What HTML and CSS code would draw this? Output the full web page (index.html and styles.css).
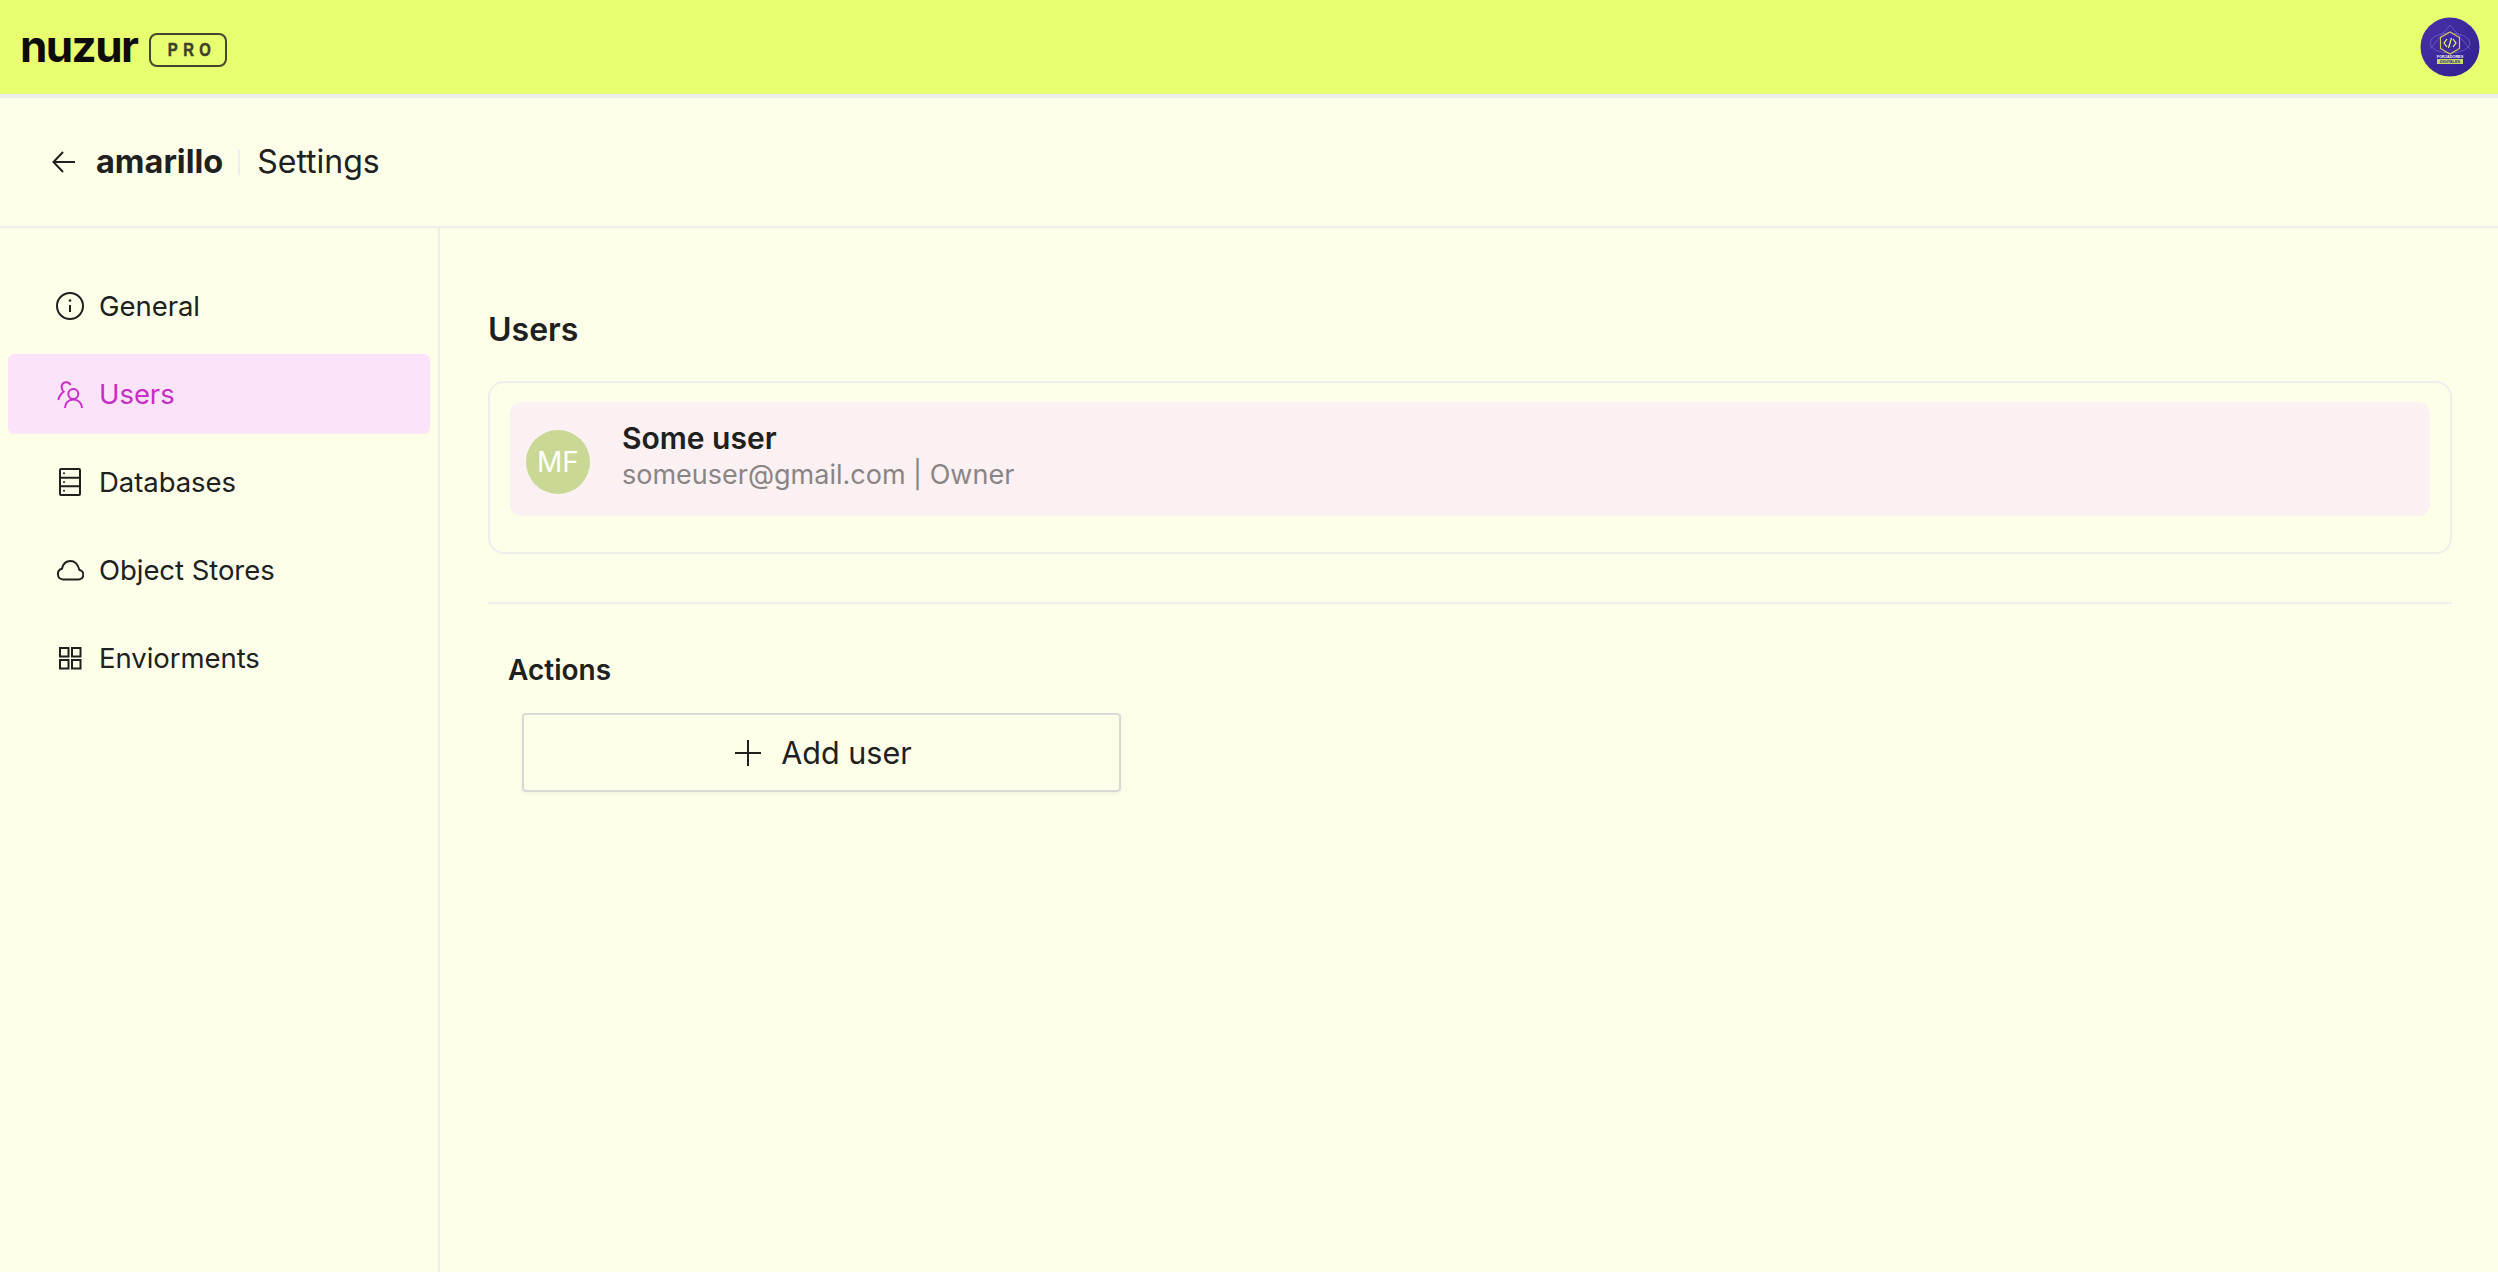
FILE: index.html
```html
<!DOCTYPE html>
<html lang="en">
<head>
<meta charset="utf-8">
<title>amarillo Settings</title>
<link rel="stylesheet" href="styles.css">
</head>
<body>
<header class="topbar">
  <div class="brand">
    <span class="logo">nuzur</span>
    <span class="pro"><span class="pro-text">PRO</span></span>
  </div>
  <svg class="org-avatar" viewBox="0 0 60 60" aria-label="Organization">
    <defs>
      <linearGradient id="orgbg" x1="0" y1="0" x2="1" y2="1">
        <stop offset="0" stop-color="#4b2fa8"/>
        <stop offset="1" stop-color="#2f218f"/>
      </linearGradient>
    </defs>
    <circle cx="30" cy="30" r="29.500" fill="url(#orgbg)"/>
    <g fill="none" stroke="#8f84d8" stroke-width=".5">
      <ellipse cx="30" cy="26" rx="20" ry="10"/>
      <path d="M30 8 L10 32 M30 8 L50 32"/>
    </g>
    <path d="M30 15 L39.500 20.500 V31.500 L30 37 L20.500 31.500 V20.500 Z" fill="#3f2a9c" stroke="#d9c95c" stroke-width="1.200"/>
    <path d="M27 22 L24 26 L27 30 M33 22 L36 26 L33 30 M31.500 21 L28.500 31" fill="none" stroke="#e8ff6f" stroke-width="1.200"/>
    <text class="org-line" x="30" y="41" text-anchor="middle">FORJADORES</text>
    <rect x="17" y="42" width="26" height="5" fill="#c9df5a"/>
    <text class="org-line org-line-dark" x="30" y="46.200" text-anchor="middle">DIGITALES</text>
  </svg>
</header>

<section class="subbar">
  <svg class="back" viewBox="0 0 24 24"><path d="M23 12H1.500M11 2 1.500 12 11 22"/></svg>
  <h1 class="project">amarillo</h1>
  <span class="vsep"></span>
  <span class="subtitle">Settings</span>
</section>

<div class="layout">
  <nav class="sidebar">
    <a class="nav-item">
      <svg class="nav-icon" viewBox="0 0 28 28"><circle cx="14" cy="14" r="13"/><path d="M14 13v7"/><circle class="dot" cx="14" cy="8.500" r="1.300"/></svg>
      <span>General</span>
    </a>
    <a class="nav-item active">
      <svg class="nav-icon" viewBox="0 0 28 28"><circle cx="17.300" cy="14" r="5"/><path d="M9 28c0-5 3.500-8.500 8.300-8.500S26 23 26 28"/><path d="M14.700 5C13.500 3 11.500 2 9.500 2.300 6.800 2.800 5.200 5 5.700 7.500c.2 1.700.9 3.300 1.900 4.200C4.800 13.800 3 16.800 2.300 20"/></svg>
      <span>Users</span>
    </a>
    <a class="nav-item">
      <svg class="nav-icon" viewBox="0 0 28 28"><rect x="4" y="1" width="20" height="26" rx="1"/><path d="M4 9.700h20M4 18.300h20"/><circle class="dot" cx="8" cy="5.300" r="1"/><circle class="dot" cx="8" cy="14" r="1"/><circle class="dot" cx="8" cy="22.700" r="1"/></svg>
      <span>Databases</span>
    </a>
    <a class="nav-item">
      <svg class="nav-icon" viewBox="0 0 28 28"><path d="M7 23.500h15.500a4.800 4.800 0 0 0 1-9.500C22 8.800 18.800 5 14.500 5 10.200 5 7 8 6 12.700A5.500 5.500 0 0 0 7 23.500Z"/></svg>
      <span>Object Stores</span>
    </a>
    <a class="nav-item">
      <svg class="nav-icon" viewBox="0 0 28 28"><rect x="4" y="4" width="8.500" height="8.500"/><rect x="16" y="4" width="8.500" height="8.500"/><rect x="4" y="16" width="8.500" height="8.500"/><rect x="16" y="16" width="8.500" height="8.500"/></svg>
      <span>Enviorments</span>
    </a>
  </nav>

  <main class="content">
    <h2 class="section-title">Users</h2>
    <div class="user-card">
      <div class="user-row">
        <div class="user-avatar">MF</div>
        <div class="user-info">
          <div class="user-name">Some user</div>
          <div class="user-meta">someuser@gmail.com | Owner</div>
        </div>
      </div>
    </div>
    <hr class="divider">
    <h3 class="actions-title">Actions</h3>
    <button class="add-btn" type="button">
      <svg class="plus" viewBox="0 0 28 28"><path d="M14 1v26M1 14h26"/></svg>
      <span>Add user</span>
    </button>
  </main>
</div>
</body>
</html>
```
FILE: styles.css
```css
* { box-sizing: border-box; }
html, body { height: 100%; }
body {
  margin: 0;
  display: flex;
  flex-direction: column;
  background: #fdffe9;
  color: #20201e;
  font-family: Inter, "Liberation Sans", sans-serif;
  overflow: hidden;
}

.topbar {
  height: 98px;
  flex: none;
  display: flex;
  align-items: center;
  justify-content: space-between;
  padding: 0 18px 0 20px;
  background: #e8ff70;
  border-bottom: 4px solid #eeeeec;
}
.brand { display: flex; align-items: center; gap: 12px; margin-top: 6px; }
.logo {
  font-size: 44px;
  line-height: 48px;
  font-weight: 700;
  letter-spacing: -1.600px;
  color: #0c0c0c;
  margin-top: -8px;
}
.pro {
  width: 78px;
  height: 34px;
  display: flex;
  align-items: center;
  justify-content: center;
  border: 2px solid #45472c;
  border-radius: 8px;
}
.pro-text {
  font-family: "Liberation Sans", sans-serif;
  font-size: 19px;
  line-height: 18px;
  font-weight: 700;
  letter-spacing: 7px;
  margin-right: -7px;
  color: #3e4028;
  display: inline-block;
  transform: scaleX(.78);
  -webkit-text-stroke: .5px #3e4028;
}
.org-avatar { width: 60px; height: 60px; flex: none; }
.org-line { font-family: "Liberation Sans", sans-serif; font-size: 3.800px; font-weight: 700; fill: #f2f2ff; }
.org-line-dark { fill: #2f218f; }

.subbar {
  height: 130px;
  flex: none;
  display: flex;
  align-items: center;
  padding: 0 0 0 52px;
  border-bottom: 2px solid #eeeeec;
}
.back { width: 24px; height: 24px; fill: none; stroke: #20201e; stroke-width: 2; margin-right: 20px; }
.project { margin: 0; font-size: 32.500px; line-height: 40px; font-weight: 700; }
.vsep { width: 2px; height: 25px; margin: 0 17px 0 15px; background: #eeeef0; }
.subtitle { font-size: 32px; line-height: 40px; font-weight: 400; }

.layout { flex: 1; display: flex; min-height: 0; }
.sidebar {
  width: 440px;
  flex: none;
  display: flex;
  flex-direction: column;
  gap: 8px;
  padding: 38px 8px 0;
  border-right: 2px solid #eeeeec;
}
.nav-item {
  height: 80px;
  display: flex;
  align-items: center;
  gap: 15px;
  padding-left: 48px;
  border-radius: 6px;
  font-size: 27.500px;
  line-height: 36px;
  letter-spacing: -.05px;
}
.nav-item.active { background: #fbe4f9; color: #c62fc6; }
.nav-icon { width: 28px; height: 28px; flex: none; fill: none; stroke: currentColor; stroke-width: 2; overflow: hidden; }
.nav-icon .dot { fill: currentColor; stroke: none; }

.content { flex: 1; min-width: 0; padding: 81px 46px 0 48px; }
.section-title { margin: 0 0 30px; font-size: 32px; line-height: 42px; font-weight: 600; }
.user-card {
  height: 173px;
  padding: 19px 20px;
  border: 2px solid #eeeeec;
  border-radius: 16px;
}
.user-row {
  height: 114px;
  display: flex;
  align-items: center;
  gap: 32px;
  padding: 6px 16px 0;
  background: #fbf0f2;
  border-radius: 12px;
}
.user-avatar {
  width: 64px;
  height: 64px;
  flex: none;
  display: flex;
  align-items: center;
  justify-content: center;
  border-radius: 50%;
  background: #c9d894;
  color: #fff;
  font-size: 28px;
}
.user-info { margin-top: -11px; }
.user-name { font-size: 30px; line-height: 36px; font-weight: 600; }
.user-meta { font-size: 27px; line-height: 37px; color: #8a8585; }
.divider { margin: 48px 0 0; height: 2px; border: 0; background: #eeeeec; }
.actions-title { margin: 48px 0 0 20px; font-size: 28px; line-height: 36px; font-weight: 600; }
.add-btn {
  width: 599px;
  height: 79px;
  margin: 25px 0 0 34px;
  display: flex;
  align-items: center;
  justify-content: center;
  gap: 19px;
  padding: 0 0 0 3px;
  background: transparent;
  border: 2px solid #d8d8d6;
  border-radius: 4px;
  box-shadow: 0 2px 4px rgba(0, 0, 0, .05);
  color: #20201e;
  font-family: inherit;
  font-size: 30.500px;
  line-height: 40px;
}
.plus { width: 28px; height: 28px; fill: none; stroke: #20201e; stroke-width: 2; }
```
